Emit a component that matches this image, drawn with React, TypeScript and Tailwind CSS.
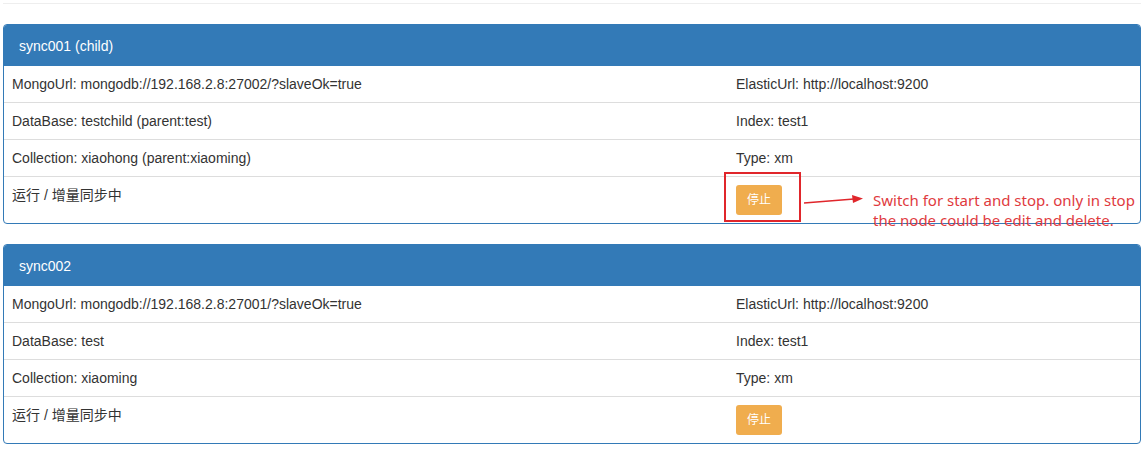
import React from 'react';

interface SyncNode {
  name: string;
  mongoUrl: string;
  database: string;
  collection: string;
  elasticUrl: string;
  index: string;
  type: string;
  status: string;
}

const nodes: SyncNode[] = [
  {
    name: 'sync001 (child)',
    mongoUrl: 'mongodb://192.168.2.8:27002/?slaveOk=true',
    database: 'testchild (parent:test)',
    collection: 'xiaohong (parent:xiaoming)',
    elasticUrl: 'http://localhost:9200',
    index: 'test1',
    type: 'xm',
    status: '运行 / 增量同步中',
  },
  {
    name: 'sync002',
    mongoUrl: 'mongodb://192.168.2.8:27001/?slaveOk=true',
    database: 'test',
    collection: 'xiaoming',
    elasticUrl: 'http://localhost:9200',
    index: 'test1',
    type: 'xm',
    status: '运行 / 增量同步中',
  },
];

function Row({ left, right, last }: { left: React.ReactNode; right: React.ReactNode; last?: boolean }) {
  return (
    <div className={`grid grid-cols-[724px_1fr] items-start px-2 py-2 ${last ? '' : 'border-b border-[#ddd]'}`}>
      <div className="leading-5">{left}</div>
      <div className="leading-5">{right}</div>
    </div>
  );
}

function Panel({ node, annotate }: { node: SyncNode; annotate?: boolean }) {
  return (
    <div className="relative mb-5 rounded-[4px] border border-[#337ab7] bg-white">
      <div className="rounded-t-[3px] bg-[#337ab7] px-[15px] pt-[10.5px] pb-[10.5px] leading-5 text-white">{node.name}</div>
      <Row left={`MongoUrl: ${node.mongoUrl}`} right={`ElasticUrl: ${node.elasticUrl}`} />
      <Row left={`DataBase: ${node.database}`} right={`Index: ${node.index}`} />
      <Row left={`Collection: ${node.collection}`} right={`Type: ${node.type}`} />
      <Row
        last
        left={node.status}
        right={
          <button className="h-[30px] w-[46px] rounded-[3px] bg-[#f0ad4e] text-[12px] text-white">停止</button>
        }
      />
      {annotate && (
        <>
          <div className="absolute left-[720px] top-[147px] h-[50px] w-[77px] border-2 border-[#e0262b]" />
          <svg className="absolute left-[798px] top-[168px]" width="64" height="14" viewBox="0 0 64 14">
            <line x1="2" y1="10" x2="52" y2="6" stroke="#e0262b" strokeWidth="1.6" />
            <path d="M50 2 L61 5.5 L51 10 Z" fill="#e0262b" />
          </svg>
          <div className="absolute left-[869px] top-[165px] whitespace-nowrap font-['Noto_Sans',sans-serif] text-[15px] leading-[20px] text-[#e03a3e]">
            Switch for start and stop. only in stop
            <br />
            the node could be edit and delete.
          </div>
        </>
      )}
    </div>
  );
}

export default function App() {
  return (
    <div className="min-h-[449px] bg-white px-[3px] font-['Liberation_Sans','Noto_Sans_CJK_SC',sans-serif] text-[14px] text-[#333]">
      <div className="h-[4px] border-b border-[#eee]" />
      <div className="mt-5">
        {nodes.map((node, i) => (
          <Panel key={node.name} node={node} annotate={i === 0} />
        ))}
      </div>
    </div>
  );
}
